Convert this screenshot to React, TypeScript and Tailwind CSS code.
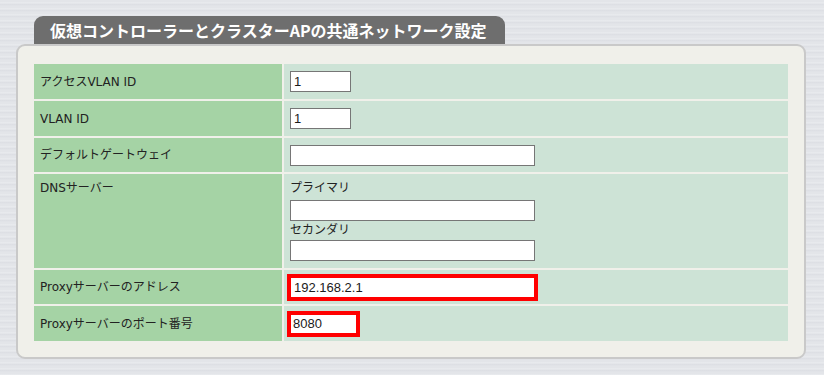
import React from "react";

function Row({ label, children, h = "h-[35px]", top = false }: { label: string; children: React.ReactNode; h?: string; top?: boolean }) {
  return (
    <div className={`flex gap-[2px] ${h}`}>
      <div className={`w-[248px] shrink-0 bg-[#a5d3a5] px-[6px] text-[12px] text-[#222] flex ${top ? "items-start pt-[5px] leading-[18px]" : "items-center"}`}>
        {label}
      </div>
      <div className={`flex-1 bg-[#cde3d6] px-[6px] flex ${top ? "flex-col items-start" : "items-center"}`}>
        {children}
      </div>
    </div>
  );
}

const inputCls =
  "h-[21px] border border-[#767676] bg-white px-[3px] text-[13px] text-[#1a1a1a] outline-none font-['Liberation_Sans',Arial,sans-serif]";
const redCls =
  "border border-[#ff0000] outline-[3px] outline-solid outline-[#ff0000] bg-white text-[13px] text-[#1a1a1a] font-['Liberation_Sans',Arial,sans-serif]";

export default function App() {
  return (
    <div className="w-[824px] h-[375px] overflow-hidden bg-[repeating-linear-gradient(180deg,#e3e5e9_0px,#e3e5e9_2px,#eceef1_3px,#dcdee3_4px,#e3e5e9_6px)] font-['DejaVu_Sans','Noto_Sans_CJK_JP',sans-serif]">
      <div className="pt-[16px]">
        <div className="ml-[34px] w-[471px] h-[28px] rounded-t-[9px] bg-[#6e6e6e] pl-[16px] flex items-center text-[16px] font-bold text-white leading-none font-['Noto_Sans_CJK_JP','Noto_Sans',sans-serif]">
          仮想コントローラーとクラスターAPの共通ネットワーク設定
        </div>
        <div className="ml-[16px] w-[790px] h-[315px] rounded-[9px] border-2 border-[#c9c9c9] bg-[#f0f0ea] pt-[18px] px-[16px]">
          <div className="flex flex-col gap-[2px]">
            <Row label="アクセスVLAN ID">
              <input className={`${inputCls} w-[61px]`} defaultValue="1" />
            </Row>
            <Row label="VLAN ID">
              <input className={`${inputCls} w-[61px]`} defaultValue="1" />
            </Row>
            <Row label="デフォルトゲートウェイ" h="h-[34px]">
              <input className={`${inputCls} w-[245px]`} defaultValue="" />
            </Row>
            <Row label="DNSサーバー" h="h-[94px]" top>
              <div className="pt-[5px] text-[12px] leading-[18px] text-[#222]">プライマリ</div>
              <input className={`${inputCls} w-[245px] mt-[3px]`} defaultValue="" />
              <div className="text-[12px] leading-[18px] text-[#222]">セカンダリ</div>
              <input className={`${inputCls} w-[245px] mt-[1px]`} defaultValue="" />
            </Row>
            <Row label="Proxyサーバーのアドレス" h="h-[34px]">
              <input className={`${redCls} h-[21px] w-[245px] px-[3px]`} defaultValue="192.168.2.1" />
            </Row>
            <Row label="Proxyサーバーのポート番号">
              <input className={`${redCls} h-[20px] w-[67px] px-[2px]`} defaultValue="8080" />
            </Row>
          </div>
        </div>
      </div>
    </div>
  );
}
